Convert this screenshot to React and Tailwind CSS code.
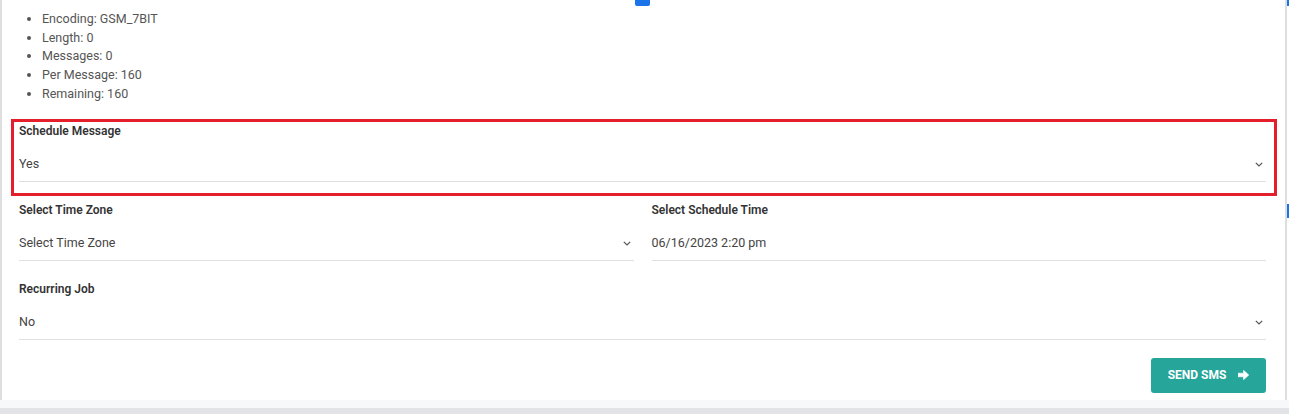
import React from "react";

function Chevron() {
  return (
    <svg width="8" height="5" viewBox="0 0 8 5" className="shrink-0">
      <polyline points="0.8,0.8 4,4 7.2,0.8" fill="none" stroke="#555" strokeWidth="1.2" />
    </svg>
  );
}

function Arrow() {
  return (
    <svg width="11" height="10" viewBox="0 0 11 10" className="shrink-0">
      <polygon points="0,3.2 5.5,3.2 5.5,0.3 10.8,5 5.5,9.7 5.5,6.8 0,6.8" fill="#fff" strokeLinejoin="round" stroke="#fff" strokeWidth="0.6" />
    </svg>
  );
}

function Field({ label, value, chevron = true }) {
  return (
    <div className="flex flex-col">
      <div className="h-4 leading-4 text-[12px] font-semibold text-[#333]">{label}</div>
      <div className="mt-[7px] h-[36px] pt-[3px] flex items-center justify-between border-b border-[#e0e0e0] pr-[3px] text-[12.5px] text-[#444]">
        <span>{value}</span>
        {chevron && <Chevron />}
      </div>
    </div>
  );
}

export default function App() {
  return (
    <div className="relative w-[1289px] h-[414px] overflow-hidden bg-white" style={{ fontFamily: "Roboto, 'Liberation Sans', sans-serif" }}>
      <div className="w-[1287px] h-[400px] border-x-2 border-[#dedede] bg-white pl-[17px] pr-[19px] pt-[10px]">
        <ul className="list-disc pl-[23px] text-[12.5px] leading-[18.7px] text-[#555]">
          <li>Encoding: GSM_7BIT</li>
          <li>Length: 0</li>
          <li>Messages: 0</li>
          <li>Per Message: 160</li>
          <li>Remaining: 160</li>
        </ul>
        <div className="mt-[19px] flex flex-col gap-[20px]">
          <div className="relative">
            <Field label="Schedule Message" value="Yes" />
            <span className="pointer-events-none absolute -left-[8px] -right-[11px] -top-[4px] -bottom-[14px] border-[3px] border-[#e41f2b]" />
          </div>
          <div className="grid grid-cols-2 gap-x-[18px]">
            <Field label="Select Time Zone" value="Select Time Zone" />
            <Field label="Select Schedule Time" value="06/16/2023 2:20 pm" chevron={false} />
          </div>
          <Field label="Recurring Job" value="No" />
        </div>
        <div className="mt-[18px] flex justify-end">
          <button className="h-[35px] w-[115px] rounded-[3px] bg-[#26a69a] flex items-center justify-center gap-[12px] text-[12px] font-bold text-white">
            <span>SEND SMS</span>
            <Arrow />
          </button>
        </div>
      </div>
      <div className="h-[8px] bg-[#f7f8fa]" />
      <div className="h-[6px] bg-[#e2e3e7]" />
      <span className="absolute left-[635px] top-0 w-[15px] h-[6px] rounded-b-[2px] bg-[#1a73e8]" />
      <span className="absolute left-[1287px] top-0 w-[2px] h-[6px] bg-[#1a73e8]" />
      <span className="absolute left-[1287px] top-[204px] w-[2px] h-[14px] bg-[#1a73e8]" />
    </div>
  );
}
